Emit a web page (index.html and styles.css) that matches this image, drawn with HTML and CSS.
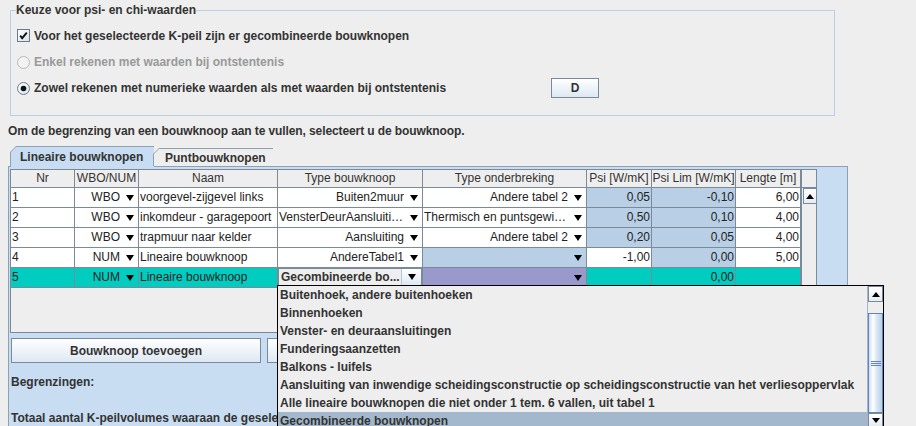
FILE: index.html
```html
<!DOCTYPE html>
<html lang="nl">
<head>
<meta charset="utf-8">
<title>Keuze voor psi- en chi-waarden</title>
<link rel="stylesheet" href="styles.css">
</head>
<body>
<div class="page">
  <fieldset class="group">
    <legend class="group-title">Keuze voor psi- en chi-waarden</legend>
    <div class="opt opt-first">
      <svg class="check" width="13" height="13" viewBox="0 0 13 13">
        <defs><linearGradient id="cg" x1="0" y1="0" x2="1" y2="1"><stop offset="0" stop-color="#ffffff"/><stop offset="1" stop-color="#d6e2ef"/></linearGradient></defs>
        <rect x="0.5" y="0.5" width="12" height="12" fill="url(#cg)" stroke="#6b7b8c"/>
        <path d="M3.2 6.6 L5.2 9.2 L9.8 3.6" fill="none" stroke="#111" stroke-width="1.9"/>
      </svg>
      <span class="opt-label">Voor het geselecteerde K-peil zijn er gecombineerde bouwknopen</span>
    </div>
    <div class="opt disabled">
      <svg class="radio" width="13" height="13" viewBox="0 0 13 13">
        <circle cx="6.5" cy="6.5" r="6" fill="#f2f2f2" stroke="#b8b8b8"/>
      </svg>
      <span class="opt-label">Enkel rekenen met waarden bij ontstentenis</span>
    </div>
    <div class="opt">
      <svg class="radio" width="13" height="13" viewBox="0 0 13 13">
        <defs><linearGradient id="rg" x1="0" y1="0" x2="1" y2="1"><stop offset="0" stop-color="#ffffff"/><stop offset="1" stop-color="#d6e2ef"/></linearGradient></defs>
        <circle cx="6.5" cy="6.5" r="6" fill="url(#rg)" stroke="#6b7b8c"/>
        <circle cx="6.5" cy="6.5" r="2.8" fill="#111"/>
      </svg>
      <span class="opt-label opt-wide">Zowel rekenen met numerieke waarden als met waarden bij ontstentenis</span>
      <button class="btn btn-d">D</button>
    </div>
  </fieldset>

  <p class="hint">Om de begrenzing van een bouwknoop aan te vullen, selecteert u de bouwknoop.</p>

  <div class="tabs">
    <div class="tabbar">
      <div class="tab tab-active"><span class="tab-in">Lineaire bouwknopen</span></div>
      <div class="tab"><span class="tab-in">Puntbouwknopen</span></div>
    </div>
    <div class="tabpanel">
      <div class="scrollpane">
        <div class="viewport">
          <div class="grid">
            <div class="th">Nr</div>
            <div class="th">WBO/NUM</div>
            <div class="th">Naam</div>
            <div class="th">Type bouwknoop</div>
            <div class="th">Type onderbreking</div>
            <div class="th">Psi [W/mK]</div>
            <div class="th">Psi Lim [W/mK]</div>
            <div class="th">Lengte [m]</div>

            <div class="td">1</div>
            <div class="td combo"><span class="cv">WBO</span><i class="tri"></i></div>
            <div class="td">voorgevel-zijgevel links</div>
            <div class="td combo"><span class="cv">Buiten2muur</span><i class="tri"></i></div>
            <div class="td combo"><span class="cv">Andere tabel 2</span><i class="tri"></i></div>
            <div class="td num ro">0,05</div>
            <div class="td num ro">-0,10</div>
            <div class="td num">6,00</div>

            <div class="td">2</div>
            <div class="td combo"><span class="cv">WBO</span><i class="tri"></i></div>
            <div class="td">inkomdeur - garagepoort</div>
            <div class="td combo"><span class="cv">VensterDeurAansluitingen</span><i class="tri"></i></div>
            <div class="td combo"><span class="cv">Thermisch en puntsgewijs onderbroken</span><i class="tri"></i></div>
            <div class="td num ro">0,50</div>
            <div class="td num ro">0,10</div>
            <div class="td num">4,00</div>

            <div class="td">3</div>
            <div class="td combo"><span class="cv">WBO</span><i class="tri"></i></div>
            <div class="td">trapmuur naar kelder</div>
            <div class="td combo"><span class="cv">Aansluiting</span><i class="tri"></i></div>
            <div class="td combo"><span class="cv">Andere tabel 2</span><i class="tri"></i></div>
            <div class="td num ro">0,20</div>
            <div class="td num ro">0,05</div>
            <div class="td num">4,00</div>

            <div class="td">4</div>
            <div class="td combo"><span class="cv">NUM</span><i class="tri"></i></div>
            <div class="td">Lineaire bouwknoop</div>
            <div class="td combo"><span class="cv">AndereTabel1</span><i class="tri"></i></div>
            <div class="td combo ro"><span class="cv"></span><i class="tri"></i></div>
            <div class="td num">-1,00</div>
            <div class="td num ro">0,00</div>
            <div class="td num">5,00</div>

            <div class="td sel">5</div>
            <div class="td combo sel"><span class="cv">NUM</span><i class="tri"></i></div>
            <div class="td sel">Lineaire bouwknoop</div>
            <div class="td editor">
              <span class="editor-box"><span class="editor-text">Gecombineerde bo...</span><span class="editor-btn"><i class="tri"></i></span></span>
            </div>
            <div class="td combo purple"><span class="cv"></span><i class="tri"></i></div>
            <div class="td num sel"></div>
            <div class="td num sel">0,00</div>
            <div class="td num sel"></div>
          </div>
        </div>
        <div class="vbar">
          <div class="corner"></div>
          <div class="vbar-track">
            <div class="sb-btn"><i class="tri-up"></i></div>
          </div>
        </div>
      </div>

      <div class="buttons">
        <button class="btn btn-wide">Bouwknoop toevoegen</button>
        <button class="btn btn-wide">Bouwknoop verwijderen</button>
      </div>
      <div class="label label-first">Begrenzingen:</div>
      <div class="label label-second">Totaal aantal K-peilvolumes waaraan de geselecteerde bouwknoop grenst:</div>
    </div>
  </div>

  <div class="popup">
    <ul class="popup-list">
      <li>Buitenhoek, andere buitenhoeken</li>
      <li>Binnenhoeken</li>
      <li>Venster- en deuraansluitingen</li>
      <li>Funderingsaanzetten</li>
      <li>Balkons - luifels</li>
      <li>Aansluiting van inwendige scheidingsconstructie op scheidingsconstructie van het verliesoppervlak</li>
      <li>Alle lineaire bouwknopen die niet onder 1 tem. 6 vallen, uit tabel 1</li>
      <li class="popup-sel">Gecombineerde bouwknopen</li>
    </ul>
    <div class="psb">
      <div class="psb-btn"><i class="tri-up"></i></div>
      <div class="psb-gap"></div>
      <div class="psb-thumb"><span class="grip"></span></div>
      <div class="psb-btn psb-down"><i class="tri"></i></div>
    </div>
  </div>
</div>
</body>
</html>
```

FILE: styles.css
```css
* { box-sizing: border-box; }

html, body {
  margin: 0;
  padding: 0;
}

body {
  background: #eeeeee;
  font-family: "Liberation Sans", Arial, sans-serif;
  font-size: 12px;
  color: #222;
  width: 916px;
  height: 426px;
  overflow: hidden;
}

.page {
  position: relative;
  width: 916px;
  height: 426px;
  padding-top: 3px;
}

/* ---------- group box ---------- */
.group {
  margin: 0 0 0 10px;
  width: 825px;
  min-width: 0;
  border: 1px solid #b8cfe5;
  padding: 5px 0 14px 6px;
}

.group-title {
  padding: 0;
  margin-left: -1px;
  font-weight: bold;
  line-height: 14px;
  color: #333;
}

.opt {
  display: flex;
  align-items: center;
  height: 26px;
  font-weight: bold;
  color: #333;
}

.opt-first { height: 27px; }

.opt svg { flex: none; display: block; }

.opt-label { margin-left: 4px; white-space: nowrap; }

.opt-wide { width: 517px; flex: none; }

.disabled { color: #999; }

/* ---------- buttons ---------- */
.btn {
  font-family: inherit;
  font-size: 12px;
  font-weight: bold;
  color: #333;
  border: 1px solid #7a8a99;
  background: linear-gradient(#ffffff 0%, #f3f7fb 35%, #dde8f3 100%);
  padding: 0;
  margin: 0;
}

.btn-d {
  width: 48px;
  height: 20px;
}

/* ---------- hint ---------- */
.hint {
  margin: 8px 0 0 8px;
  line-height: 14px;
  font-weight: bold;
  color: #333;
  letter-spacing: -0.1px;
}

/* ---------- tabs ---------- */
.tabs {
  margin: 8px 0 0 8px;
  width: 840px;
}

.tabbar {
  display: flex;
  align-items: flex-end;
  height: 20px;
  padding-left: 2px;
  position: relative;
  z-index: 1;
}

.tab {
  background: #8da0b5;
  clip-path: polygon(6px 0, 100% 0, 100% 100%, 0 100%, 0 6px);
  padding: 1px 1px 0 1px;
  height: 18px;
  display: flex;
}

.tab-in {
  flex: 1;
  display: flex;
  align-items: center;
  background: #eeeeee;
  clip-path: polygon(5px 0, 100% 0, 100% 100%, 0 100%, 0 5px);
  font-weight: bold;
  color: #333;
  padding: 0 11px 0 11px;
  white-space: nowrap;
}

.tab-active {
  height: 21px;
  width: 144px;
  margin-bottom: -1px;
  padding-bottom: 0;
}

.tab-active .tab-in {
  background: #c8ddf2;
  padding-left: 9px;
}

.tab + .tab { width: 120px; margin-left: -1px; }

.tabpanel {
  background: #c8ddf2;
  border: 1px solid #8da0b5;
  border-bottom: none;
  height: 280px;
  padding: 2px 0 0 1px;
}

/* ---------- table ---------- */
.scrollpane {
  display: flex;
  width: 807px;
  height: 164px;
  border: 1px solid #7a8a99;
  background: #eeeeee;
}

.viewport {
  width: 790px;
  flex: none;
}

.grid {
  display: grid;
  grid-template-columns: 63px 63px 138px 144px 163px 64px 83px 64px;
  grid-template-rows: 17px repeat(5, 19px);
  gap: 1px;
  background: #7a8a99;
  border-right: 1px solid #7a8a99;
  border-bottom: 1px solid #7a8a99;
}

.th {
  background: #eeeeee;
  text-align: center;
  line-height: 17px;
  white-space: nowrap;
  overflow: hidden;
  color: #333;
}

.td {
  background: #ffffff;
  line-height: 19px;
  padding: 0 1px;
  white-space: nowrap;
  overflow: hidden;
  color: #222;
}

.num { text-align: right; }

.ro { background: #b8cfe5; }

.sel { background: #00ccc0; }

.purple { background: #9999cc; }

.combo {
  display: flex;
  align-items: center;
  justify-content: flex-end;
  padding-right: 4px;
}

.cv {
  overflow: hidden;
  text-overflow: ellipsis;
  white-space: nowrap;
  min-width: 0;
}

.tri {
  flex: none;
  display: inline-block;
  width: 0;
  height: 0;
  border-left: 4.5px solid transparent;
  border-right: 4.5px solid transparent;
  border-top: 6px solid #000;
  margin-left: 6px;
}

.tri-up {
  display: inline-block;
  width: 0;
  height: 0;
  border-left: 4.5px solid transparent;
  border-right: 4.5px solid transparent;
  border-bottom: 5px solid #000;
}

.editor {
  background: #eeeeee;
  padding: 0;
  display: flex;
}

.editor-box {
  flex: 1;
  display: flex;
  align-items: stretch;
  height: 18px;
  border: 1px solid #7a8a99;
  background: #eeeeee;
}

.editor-text {
  flex: 1;
  font-weight: bold;
  color: #333;
  line-height: 16px;
  padding-left: 2px;
  border-right: 1px solid #b8c4d0;
}

.editor-btn {
  width: 19px;
  display: flex;
  align-items: center;
  justify-content: center;
  background: linear-gradient(#ffffff, #dde8f3);
}

.editor-btn .tri { margin-left: 0; }

.vbar {
  flex: 1;
  display: flex;
  flex-direction: column;
  border-left: 1px solid #7a8a99;
  margin-left: 0;
}

.corner {
  height: 18px;
  border-bottom: 1px solid #7a8a99;
  background: #eeeeee;
}

.vbar-track {
  flex: 1;
  padding-left: 1px;
  background: #eeeeee;
}

.sb-btn {
  height: 16px;
  border: 1px solid #7a8a99;
  border-right: none;
  display: flex;
  align-items: center;
  justify-content: center;
  background: linear-gradient(#ffffff, #e4ecf4);
}

/* ---------- buttons + labels ---------- */
.buttons {
  display: flex;
  gap: 6px;
  margin: 5px 0 0 1px;
}

.btn-wide {
  width: 250px;
  height: 25px;
}

.label {
  font-weight: bold;
  line-height: 14px;
  color: #333;
  margin-left: 1px;
  white-space: nowrap;
}

.label-first { margin-top: 12px; }
.label-second { margin-top: 22px; }

/* ---------- dropdown popup ---------- */
.popup {
  position: absolute;
  left: 277px;
  top: 285px;
  width: 607px;
  height: 160px;
  border: 1px solid #000;
  background: #eeeeee;
  display: flex;
  z-index: 5;
}

.popup-list {
  list-style: none;
  margin: 0;
  padding: 0;
  flex: 1;
}

.popup-list li {
  height: 18px;
  line-height: 18px;
  padding-left: 2px;
  font-weight: bold;
  color: #333;
  white-space: nowrap;
}

.popup-list .popup-sel { background: #a3b8cc; }

.psb {
  width: 16px;
  display: flex;
  flex-direction: column;
  background: #eeeeee;
  border-left: 1px solid #a7b6c6;
}

.psb-btn {
  height: 16px;
  border: 1px solid #7a8a99;
  display: flex;
  align-items: center;
  justify-content: center;
  background: linear-gradient(#ffffff, #e4ecf4);
}

.psb-btn .tri { margin-left: 0; border-top-width: 5px; }

.psb-gap {
  height: 12px;
  border-bottom: 1px solid #6382bf;
}

.psb-thumb {
  height: 99px;
  border: 1px solid #6382bf;
  border-top: none;
  background: linear-gradient(90deg, #c8ddf2 0%, #ffffff 30%, #dae7f5 60%, #b8cfe5 100%);
  display: flex;
  align-items: center;
  justify-content: center;
}

.grip {
  width: 10px;
  height: 5px;
  border-top: 1px solid #6382bf;
  border-bottom: 1px solid #6382bf;
  background: linear-gradient(#6382bf, #6382bf) center / 100% 1px no-repeat;
}

.psb-down {
  height: 14px;
  align-items: flex-start;
  padding-top: 4px;
}
```
